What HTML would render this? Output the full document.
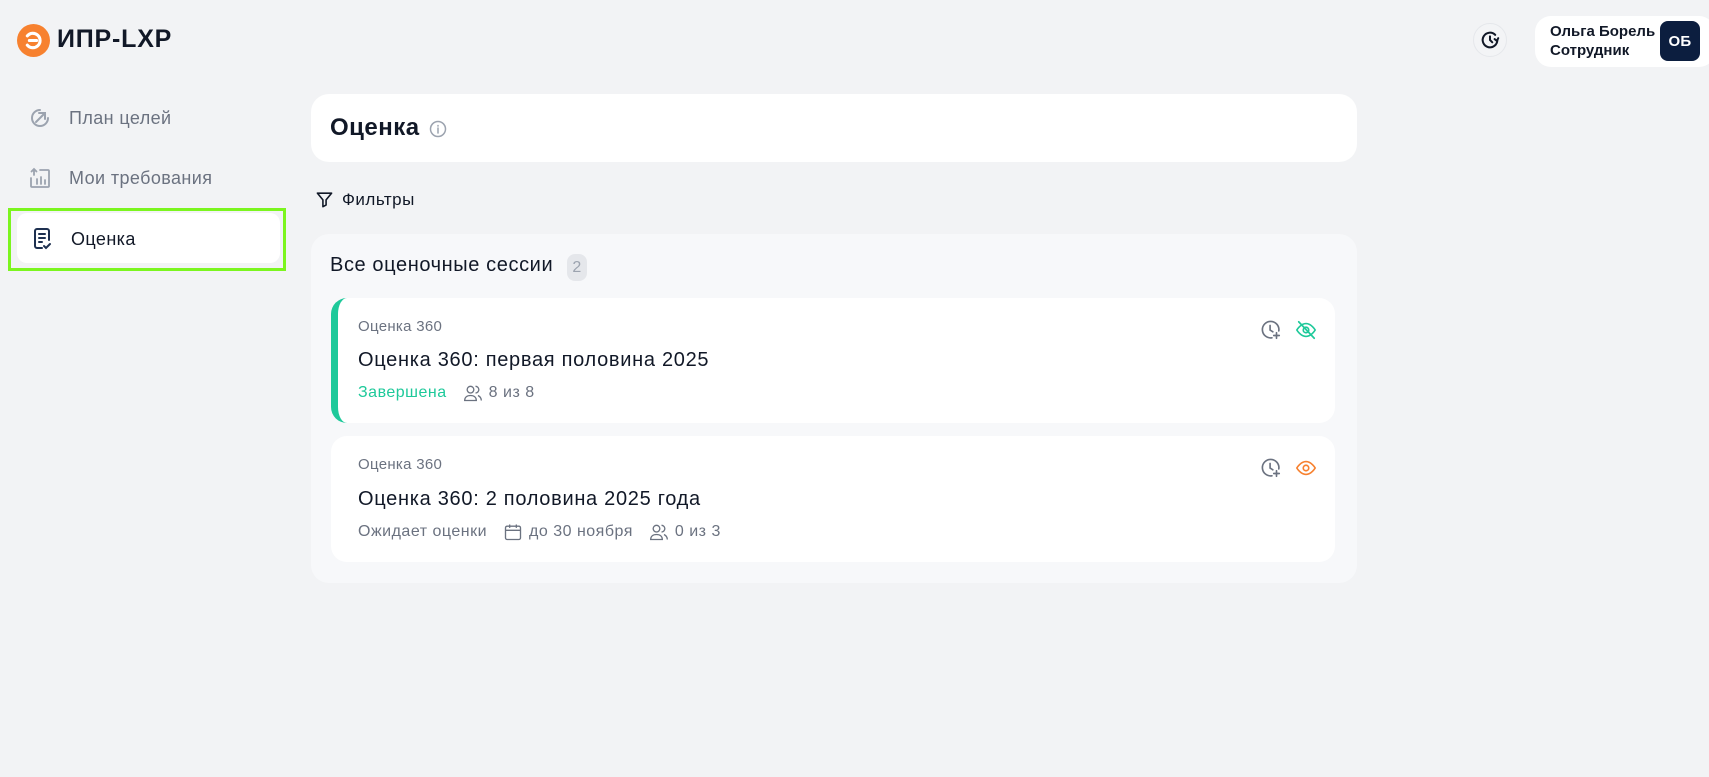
<!DOCTYPE html>
<html><head><meta charset="utf-8"><style>
*{box-sizing:border-box;margin:0;padding:0}
body{width:1709px;height:777px;background:#f2f3f5;font-family:"Liberation Sans",sans-serif;color:#111827;position:relative;overflow:hidden;letter-spacing:0.3px}
.abs{position:absolute}
.nav{position:absolute;left:28px;display:flex;align-items:center;font-size:18px;color:#6b7280;letter-spacing:0.4px}
.nav svg{margin-right:17px}
.small{font-size:15px;color:#6b7280}
.card{position:absolute;left:331px;width:1004px;background:#fff;border-radius:16px;overflow:hidden}
.meta{display:flex;align-items:center;font-size:16px;color:#6b7280;gap:6px;letter-spacing:0.5px}
</style></head><body>
<svg class="abs" style="left:17px;top:24px" width="33" height="33" viewBox="0 0 32 32"><circle cx="16" cy="16" r="16" fill="#f7812f"/><path d="M10 11.5a7 7 0 1 1 0 9M12 16h7" stroke="#fff" stroke-width="3" fill="none" stroke-linecap="round"/></svg>
<div class="abs" style="left:57px;top:25px;font-size:25px;font-weight:bold;color:#111827;letter-spacing:0.8px">ИПР-LXP</div>
<div class="nav" style="top:106px"><svg width="24" height="24" viewBox="0 0 24 24" fill="none" stroke="#9ca3af" stroke-width="2" stroke-linecap="round"><path d="M20 12a8 8 0 1 1-8-8"/><path d="M8 16l9-9M11 7h6v6"/></svg>План целей</div>
<div class="nav" style="top:166px"><svg width="24" height="24" viewBox="0 0 24 24" fill="none" stroke="#9ca3af" stroke-width="1.8" stroke-linecap="round"><path d="M6 9V3M3.5 5.5L6 3l2.5 2.5M3 12v8a1 1 0 0 0 1 1h16a1 1 0 0 0 1-1V5a1 1 0 0 0-1-1h-8M9 18v-5M13 18v-7M17 18v-4"/></svg>Мои требования</div>
<div class="abs" style="left:8px;top:208px;width:278px;height:63px;border:3px solid #7cf51f"></div>
<div class="abs" style="left:17px;top:213px;width:263px;height:50px;background:#fff;border-radius:10px"></div>
<div class="nav" style="top:227px;left:32px;color:#111827"><svg width="22" height="24" viewBox="0 0 22 24" fill="none" stroke="#1e3050" stroke-width="2" stroke-linecap="round"><path d="M10 21H5a2 2 0 0 1-2-2V4a2 2 0 0 1 2-2h10a2 2 0 0 1 2 2v9M7 7h6M7 11h6M7 15h3M12 19l2 2 4-4"/></svg>Оценка</div>
<div class="abs" style="left:1473px;top:23px;width:34px;height:34px;border-radius:50%;background:#f3f4f6;border:1px solid #e5e7eb"></div>
<svg class="abs" style="left:1479px;top:29px" width="22" height="22" viewBox="0 0 24 24" fill="none" stroke="#111827" stroke-width="2.2" stroke-linecap="round"><path d="M20 12a8 8 0 1 1-2.3-5.6"/><path d="M12 8v4l2.5 2.5M21 10l-1.5 3-2.5-2"/></svg>
<div class="abs" style="left:1535px;top:16px;width:180px;height:51px;background:#fff;border-radius:16px"></div>
<div class="abs" style="left:1550px;top:22px;font-size:15px;font-weight:bold;line-height:19px;color:#111827;letter-spacing:0">Ольга Борель<br>Сотрудник</div>
<div class="abs" style="left:1660px;top:21px;width:40px;height:40px;border-radius:8px;background:#0c1e3f;color:#fff;font-weight:bold;font-size:15px;display:flex;align-items:center;justify-content:center">ОБ</div>
<div class="abs" style="left:311px;top:94px;width:1046px;height:68px;background:#fff;border-radius:18px"></div>
<div class="abs" style="left:330px;top:114px;font-size:24px;font-weight:bold;letter-spacing:0.5px">Оценка</div>
<svg class="abs" style="left:429px;top:120px" width="18" height="18" viewBox="0 0 18 18" fill="none" stroke="#9ca3af" stroke-width="1.5"><circle cx="9" cy="9" r="7.5"/><path d="M9 8v5M9 5.5v.5" stroke-linecap="round"/></svg>
<svg class="abs" style="left:315px;top:190px" width="19" height="19" viewBox="0 0 24 24" fill="none" stroke="#111827" stroke-width="2" stroke-linejoin="round"><path d="M3 4h18l-7 8.5V19l-4 2v-8.5z"/></svg>
<div class="abs" style="left:342px;top:190px;font-size:17px;letter-spacing:0.5px">Фильтры</div>
<div class="abs" style="left:311px;top:234px;width:1046px;height:349px;background:#f7f8fa;border-radius:18px"></div>
<div class="abs" style="left:330px;top:254px;font-size:20px;letter-spacing:0.6px">Все оценочные сессии</div>
<div class="abs" style="left:567px;top:254px;width:20px;height:27px;background:#e5e7eb;border-radius:8px;font-size:16px;color:#9ca3af;text-align:center;line-height:27px">2</div>
<div class="card" style="top:298px;height:125px;border-left:7px solid #1ec99a">
 <div class="abs small" style="left:20px;top:20px">Оценка 360</div>
 <div class="abs" style="left:20px;top:51px;font-size:20px;letter-spacing:0.7px">Оценка 360: первая половина 2025</div>
 <div class="abs meta" style="left:20px;top:85px"><span style="color:#1ec99a;margin-right:10px">Завершена</span>
 <svg width="20" height="20" viewBox="0 0 24 24" fill="none" stroke="#6b7280" stroke-width="1.6"><circle cx="9" cy="8" r="4"/><path d="M2 21c0-4 3-6 7-6s7 2 7 6zM15 4a4 4 0 0 1 0 8M18 15c2 1 4 3 4 6"/></svg>8 из 8</div>
</div>
<div class="card" style="top:436px;height:126px">
 <div class="abs small" style="left:27px;top:20px">Оценка 360</div>
 <div class="abs" style="left:27px;top:52px;font-size:20px;letter-spacing:0.7px">Оценка 360: 2 половина 2025 года</div>
 <div class="abs meta" style="left:27px;top:86px"><span style="margin-right:10px">Ожидает оценки</span>
 <svg width="20" height="20" viewBox="0 0 24 24" fill="none" stroke="#6b7280" stroke-width="1.6"><rect x="3" y="5" width="18" height="16" rx="2"/><path d="M3 10h18M8 3v4M16 3v4"/></svg><span style="margin-right:10px">до 30 ноября</span>
 <svg width="20" height="20" viewBox="0 0 24 24" fill="none" stroke="#6b7280" stroke-width="1.6"><circle cx="9" cy="8" r="4"/><path d="M2 21c0-4 3-6 7-6s7 2 7 6zM15 4a4 4 0 0 1 0 8M18 15c2 1 4 3 4 6"/></svg>0 из 3</div>
</div>
<svg class="abs" style="left:1260px;top:319px" width="22" height="22" viewBox="0 0 24 24" fill="none" stroke="#6b7280" stroke-width="1.8" stroke-linecap="round"><path d="M20.5 13A9 9 0 1 0 13 20.5"/><path d="M11 7v5l3 2M18 15v6M15 18h6"/></svg>
<svg class="abs" style="left:1295px;top:319px" width="22" height="22" viewBox="0 0 24 24" fill="none" stroke="#1ec99a" stroke-width="1.8" stroke-linecap="round"><path d="M2 12s4-7 10-7 10 7 10 7-4 7-10 7S2 12 2 12z"/><circle cx="12" cy="12" r="3"/><path d="M4 3l17 18"/></svg>
<svg class="abs" style="left:1260px;top:457px" width="22" height="22" viewBox="0 0 24 24" fill="none" stroke="#6b7280" stroke-width="1.8" stroke-linecap="round"><path d="M20.5 13A9 9 0 1 0 13 20.5"/><path d="M11 7v5l3 2M18 15v6M15 18h6"/></svg>
<svg class="abs" style="left:1295px;top:457px" width="22" height="22" viewBox="0 0 24 24" fill="none" stroke="#f7812f" stroke-width="1.8"><path d="M2 12s4-7 10-7 10 7 10 7-4 7-10 7S2 12 2 12z"/><circle cx="12" cy="12" r="3"/></svg>
</body></html>
